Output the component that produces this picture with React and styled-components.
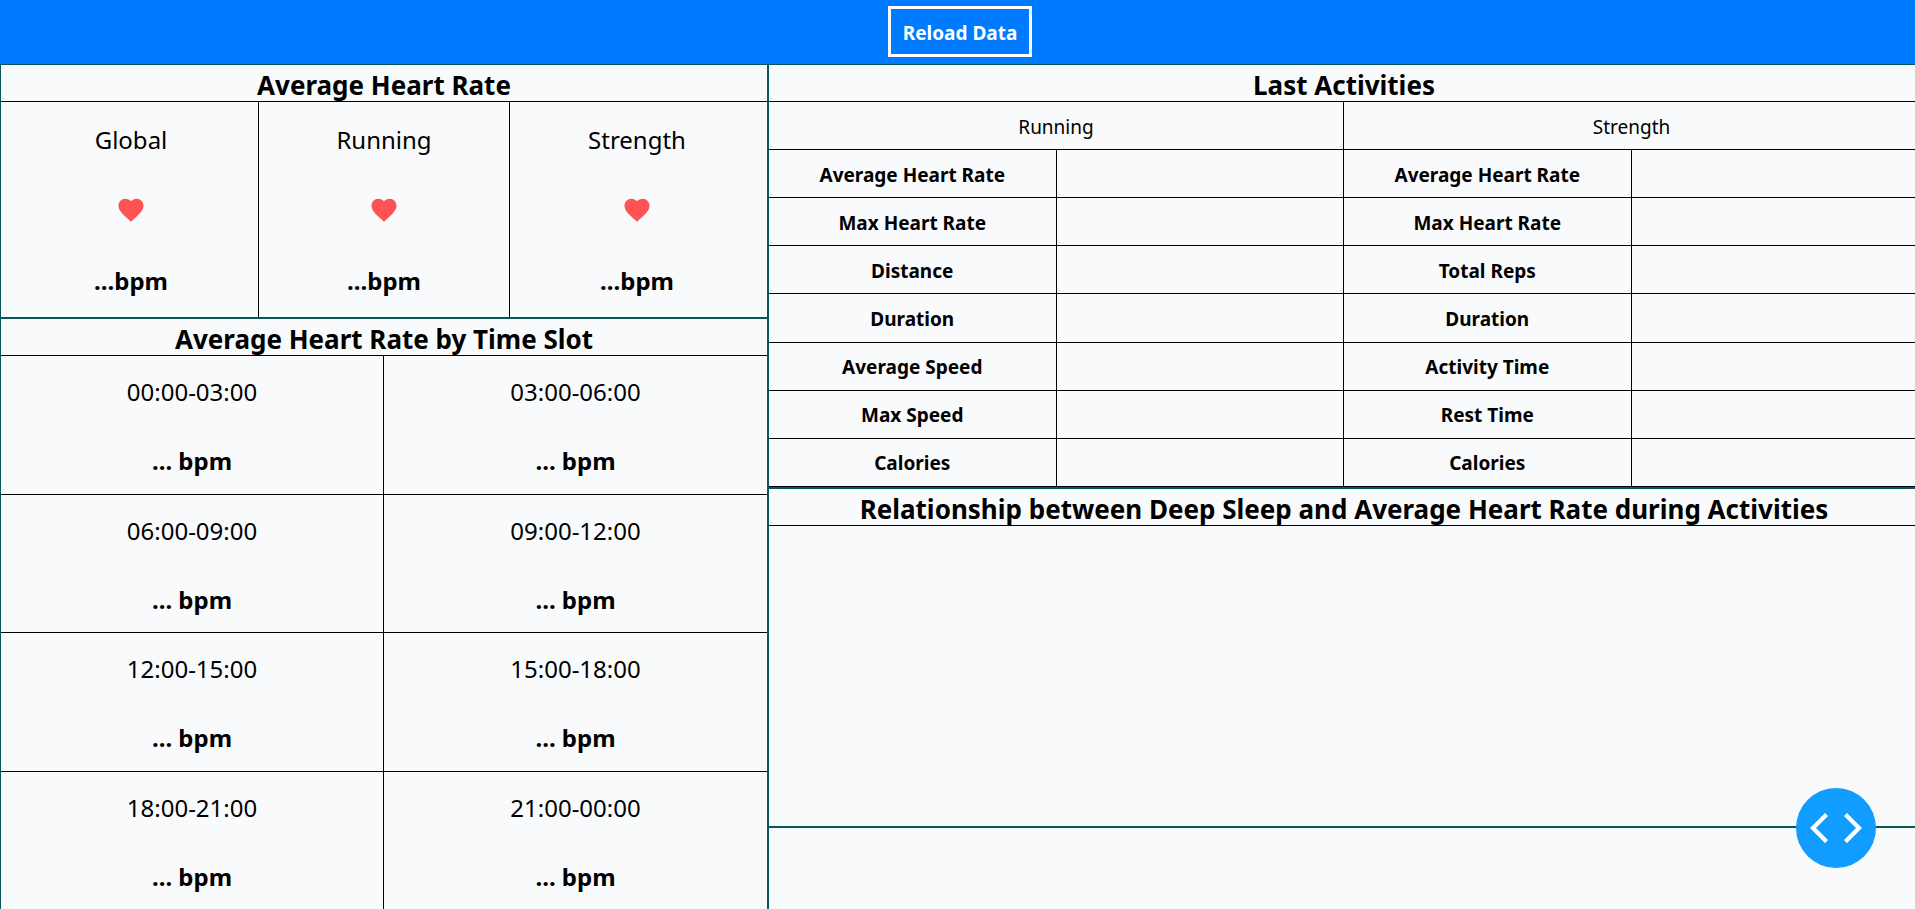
import React from "react";
import styled, { createGlobalStyle } from "styled-components";

const TEAL = "#07575b";
const LINE = "1px solid #000";

const GlobalStyle = createGlobalStyle`
  *, *::before, *::after { box-sizing: border-box; }
  html { scrollbar-width: none; overflow-x: hidden; }
  body {
    margin: 0;
    background: #f8fafc;
    color: #000;
    font-family: "Segoe UI", "Noto Sans", "Open Sans", sans-serif;
  }
`;

const Page = styled.div`
  display: flex;
  flex-direction: column;
  min-height: 100vh;
  margin-right: -5px;
`;

const Toolbar = styled.header`
  display: flex;
  justify-content: center;
  padding: 6px 0 7px;
  background: #007bff;
`;

const ReloadButton = styled.button`
  width: 144px;
  height: 51px;
  padding: 2px 0 0;
  border: 3px solid #fff;
  background: transparent;
  color: #fff;
  font: inherit;
  font-size: 19px;
  font-weight: 700;
  white-space: nowrap;
  cursor: pointer;
`;

const Dashboard = styled.main`
  flex: 1;
  display: grid;
  grid-template-columns: 2fr 3fr;
`;

const Column = styled.div`
  display: flex;
  flex-direction: column;
  min-width: 0;
`;

const Panel = styled.section`
  border: 1px solid ${TEAL};
  ${(p) => p.$fill && "flex: 1;"}
`;

const PanelTitle = styled.h2`
  margin: 0;
  padding-top: 4px;
  border-bottom: ${LINE};
  font-size: 26px;
  line-height: 32px;
  font-weight: 700;
  text-align: center;
  white-space: nowrap;
`;

const RateGrid = styled.div`
  display: grid;
  grid-template-columns: 127fr 126fr 127fr;
  padding: 0 3px;
`;

const RateCell = styled.div`
  display: flex;
  flex-direction: column;
  align-items: center;
  gap: 38px;
  padding: 21px 0 18px;

  &:nth-child(2) {
    border-left: ${LINE};
    border-right: ${LINE};
  }
`;

const Label = styled.span`
  font-size: 24px;
  line-height: 34px;
`;

const Value = styled.strong`
  font-size: 24px;
  line-height: 36px;
  font-weight: 700;
`;

const HeartIcon = styled.svg`
  display: block;
  width: 30px;
  height: 30px;
  fill: #ff5252;
`;

const SlotGrid = styled.div`
  display: grid;
  grid-template-columns: 1fr 1fr;
  grid-auto-rows: 1fr;
  min-height: 554px;
`;

const SlotCell = styled.div`
  display: flex;
  flex-direction: column;
  align-items: center;
  justify-content: center;
  gap: 34px;
  padding-top: 5px;
  border-bottom: ${LINE};

  &:nth-child(odd) {
    border-right: ${LINE};
  }
`;

const ActivityTable = styled.table`
  width: 100%;
  height: 385px;
  table-layout: fixed;
  border-collapse: separate;
  border-spacing: 0;

  th, td {
    height: 48px;
    padding: 2px 0 0;
    border-bottom: ${LINE};
    border-right: ${LINE};
    text-align: center;
    font-size: 19px;
    line-height: 28px;
  }

  th:last-child, td:last-child { border-right: 0; }
`;

const GroupHeading = styled.th`
  font-weight: 400;
`;

const MetricHeading = styled.th`
  font-weight: 700;
`;

const ChartArea = styled.div`
  height: 300px;
`;

const DebugButton = styled.button`
  position: fixed;
  right: 39px;
  bottom: 41px;
  display: flex;
  align-items: center;
  justify-content: center;
  width: 80px;
  height: 80px;
  padding: 0;
  border: 0;
  border-radius: 50%;
  background: #119dff;
  cursor: pointer;
`;

const averages = ["Global", "Running", "Strength"];

const slots = [
  "00:00-03:00", "03:00-06:00",
  "06:00-09:00", "09:00-12:00",
  "12:00-15:00", "15:00-18:00",
  "18:00-21:00", "21:00-00:00",
];

const metrics = [
  ["Average Heart Rate", "Average Heart Rate"],
  ["Max Heart Rate", "Max Heart Rate"],
  ["Distance", "Total Reps"],
  ["Duration", "Duration"],
  ["Average Speed", "Activity Time"],
  ["Max Speed", "Rest Time"],
  ["Calories", "Calories"],
];

function Heart() {
  return (
    <HeartIcon viewBox="0 0 24 24" aria-hidden="true">
      <path d="M12 21.35l-1.45-1.32C5.4 15.36 2 12.28 2 8.5 2 5.42 4.42 3 7.5 3c1.74 0 3.41.81 4.5 2.09C13.09 3.81 14.76 3 16.5 3 19.58 3 22 5.42 22 8.5c0 3.78-3.4 6.86-8.55 11.54L12 21.35z" />
    </HeartIcon>
  );
}

export default function App() {
  return (
    <>
      <GlobalStyle />
      <Page>
        <Toolbar>
          <ReloadButton type="button">Reload Data</ReloadButton>
        </Toolbar>
        <Dashboard>
          <Column>
            <Panel>
              <PanelTitle>Average Heart Rate</PanelTitle>
              <RateGrid>
                {averages.map((name) => (
                  <RateCell key={name}>
                    <Label>{name}</Label>
                    <Heart />
                    <Value>...bpm</Value>
                  </RateCell>
                ))}
              </RateGrid>
            </Panel>
            <Panel $fill>
              <PanelTitle>Average Heart Rate by Time Slot</PanelTitle>
              <SlotGrid>
                {slots.map((slot) => (
                  <SlotCell key={slot}>
                    <Label>{slot}</Label>
                    <Value>... bpm</Value>
                  </SlotCell>
                ))}
              </SlotGrid>
            </Panel>
          </Column>
          <Column>
            <Panel>
              <PanelTitle>Last Activities</PanelTitle>
              <ActivityTable>
                <thead>
                  <tr>
                    <GroupHeading colSpan={2}>Running</GroupHeading>
                    <GroupHeading colSpan={2}>Strength</GroupHeading>
                  </tr>
                </thead>
                <tbody>
                  {metrics.map(([running, strength]) => (
                    <tr key={running}>
                      <MetricHeading scope="row">{running}</MetricHeading>
                      <td />
                      <MetricHeading scope="row">{strength}</MetricHeading>
                      <td />
                    </tr>
                  ))}
                </tbody>
              </ActivityTable>
            </Panel>
            <Panel>
              <PanelTitle>
                Relationship between Deep Sleep and Average Heart Rate during Activities
              </PanelTitle>
              <ChartArea />
            </Panel>
            <Panel $fill />
          </Column>
        </Dashboard>
      </Page>
      <DebugButton type="button" aria-label="Toggle debug menu">
        <svg width="52" height="30" viewBox="0 0 52 30" fill="#fff" aria-hidden="true">
          <path d="M15 0l3 3L6 15l12 12-3 3L0 15zM37 0l-3 3 12 12-12 12 3 3 15-15z" />
        </svg>
      </DebugButton>
    </>
  );
}
